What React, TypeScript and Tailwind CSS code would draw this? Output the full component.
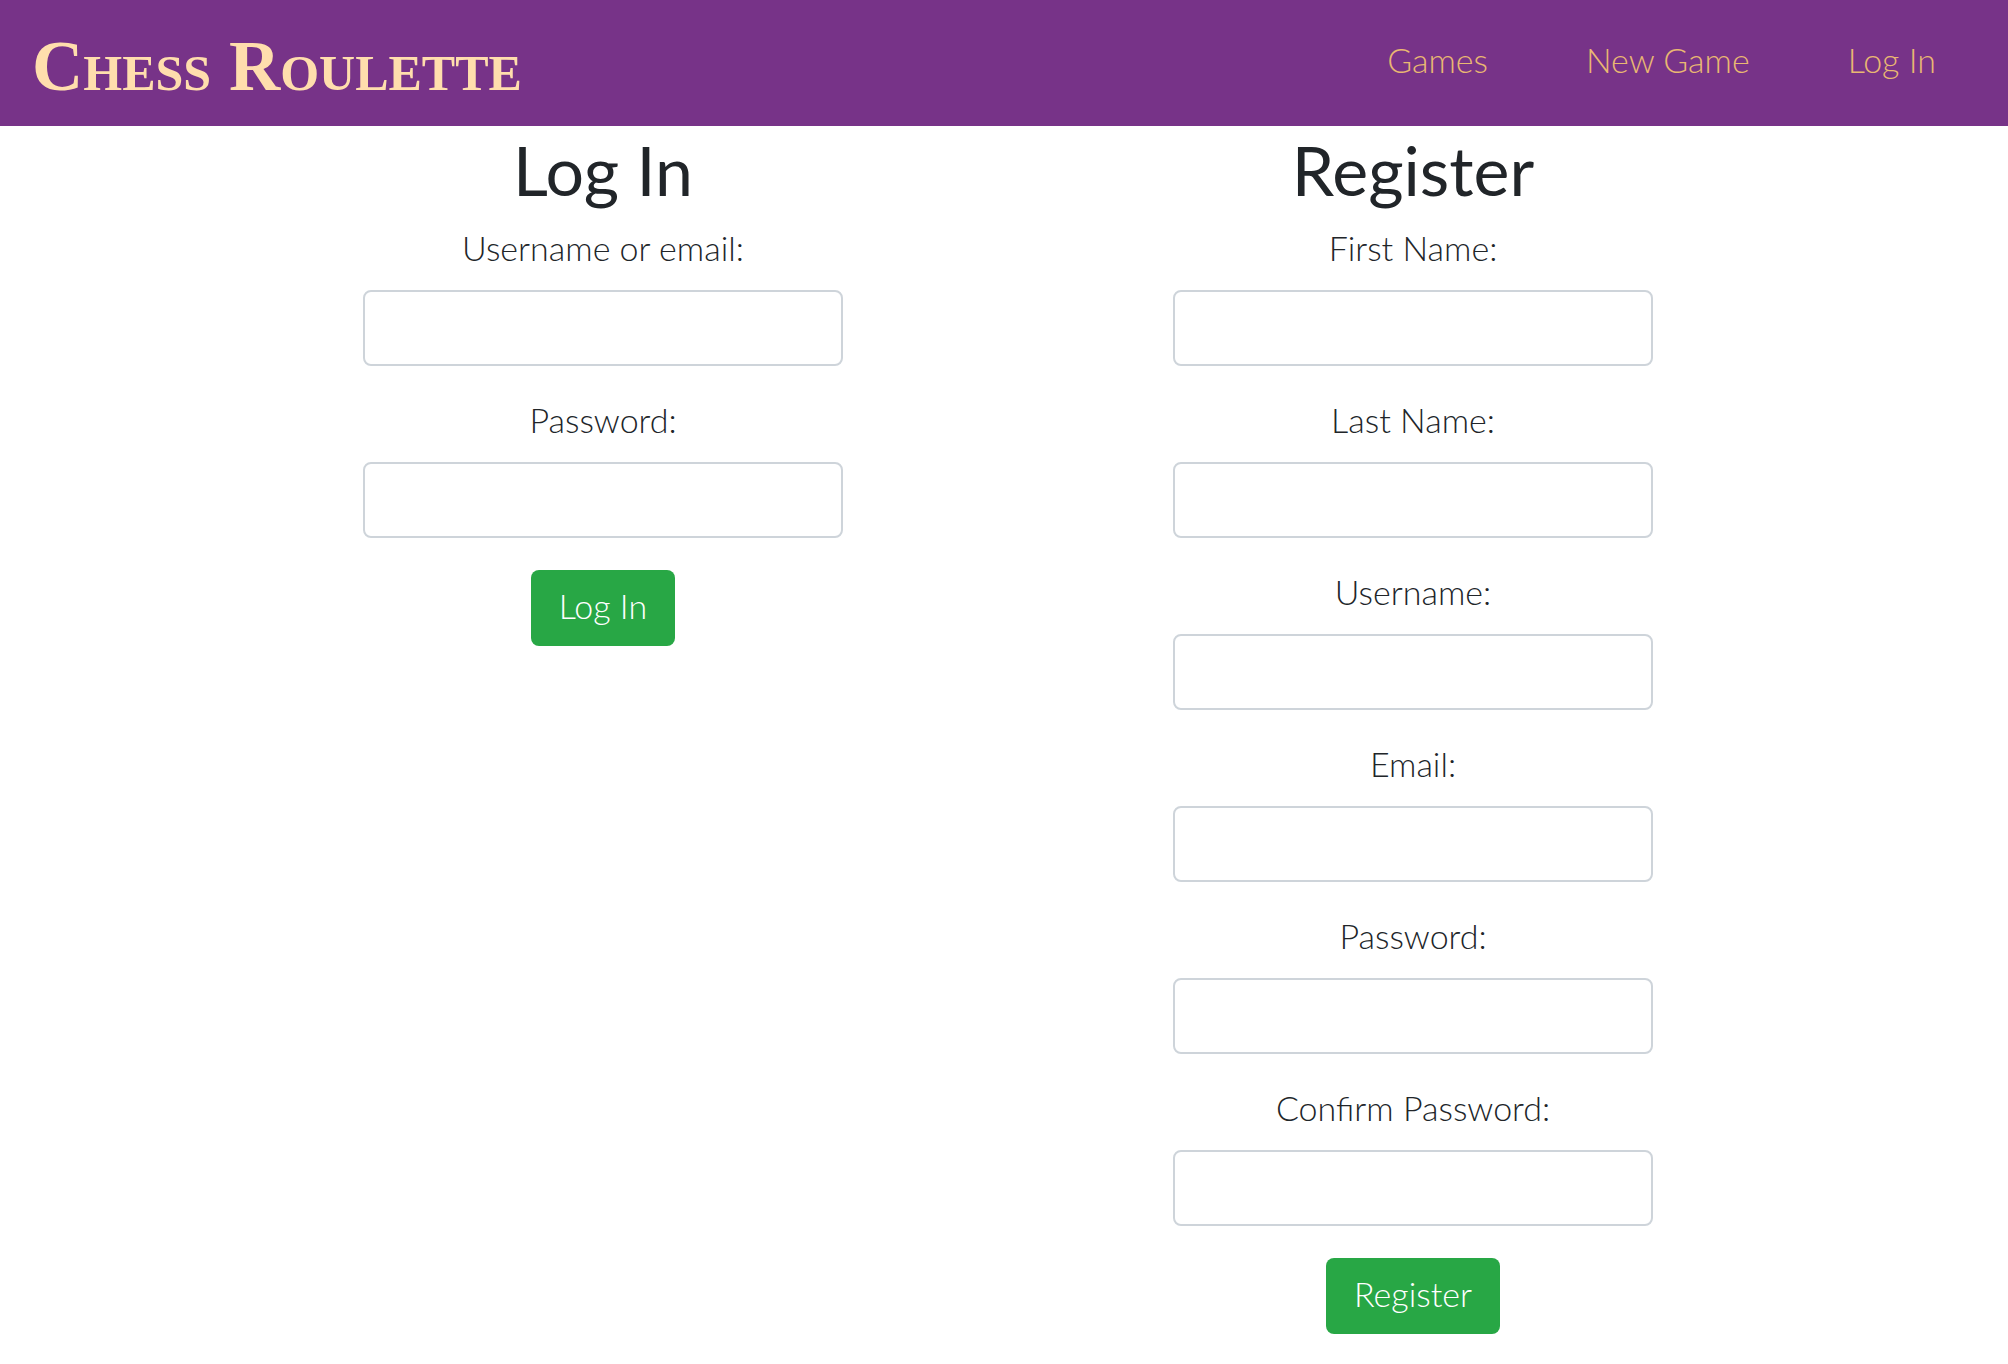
import React from "react";

type FieldProps = { id: string; label: string; type?: string };

function Field({ id, label, type = "text" }: FieldProps) {
  return (
    <div className="mb-8 flex w-full flex-col items-center">
      <label htmlFor={id} className="mb-5 text-[34px] leading-[44px]">
        {label}
      </label>
      <input
        id={id}
        name={id}
        type={type}
        className="h-[76px] w-full rounded-lg border-2 border-[#ced4da] bg-white px-6 text-[34px] text-[#495057] outline-none focus:border-[#80bdff]"
      />
    </div>
  );
}

type FormProps = { title: string; fields: FieldProps[] };

function AccountForm({ title, fields }: FormProps) {
  return (
    <form
      className="flex w-full max-w-[480px] flex-col items-center"
      onSubmit={(e) => e.preventDefault()}
    >
      <h1 className="mb-5 text-[68px] leading-[72px] font-normal">{title}</h1>
      {fields.map((f) => (
        <Field key={f.id} {...f} />
      ))}
      <button
        type="submit"
        className="h-[76px] rounded-lg bg-[#28a745] px-7 pb-1.5 text-[34px] text-white"
      >
        {title}
      </button>
    </form>
  );
}

const navItems = ["Games", "New Game", "Log In"];

const loginFields: FieldProps[] = [
  { id: "login-name", label: "Username or email:" },
  { id: "login-password", label: "Password:", type: "password" },
];

const registerFields: FieldProps[] = [
  { id: "first-name", label: "First Name:" },
  { id: "last-name", label: "Last Name:" },
  { id: "username", label: "Username:" },
  { id: "email", label: "Email:", type: "email" },
  { id: "password", label: "Password:", type: "password" },
  { id: "confirm-password", label: "Confirm Password:", type: "password" },
];

export default function App() {
  return (
    <div className="min-h-screen bg-white font-['Lato',sans-serif] font-light text-[#212529]">
      <header className="flex h-[126px] items-center justify-between bg-[#773388] pr-[72px] pl-8">
        <a
          href="#"
          className="pt-1.5 font-['Liberation_Serif',serif] text-[71px] leading-none font-bold whitespace-nowrap text-[#ffdead] [font-variant:small-caps]"
        >
          Chess Roulette
        </a>
        <nav className="flex gap-[98px] pb-1.5 text-[34px] leading-[48px] whitespace-nowrap text-[#e9b872]">
          {navItems.map((item) => (
            <a key={item} href="#">
              {item}
            </a>
          ))}
        </nav>
      </header>
      <main className="mx-auto max-w-[1628px] pt-2 pl-2">
        <div className="grid grid-cols-2 justify-items-center">
          <AccountForm title="Log In" fields={loginFields} />
          <AccountForm title="Register" fields={registerFields} />
        </div>
      </main>
    </div>
  );
}
